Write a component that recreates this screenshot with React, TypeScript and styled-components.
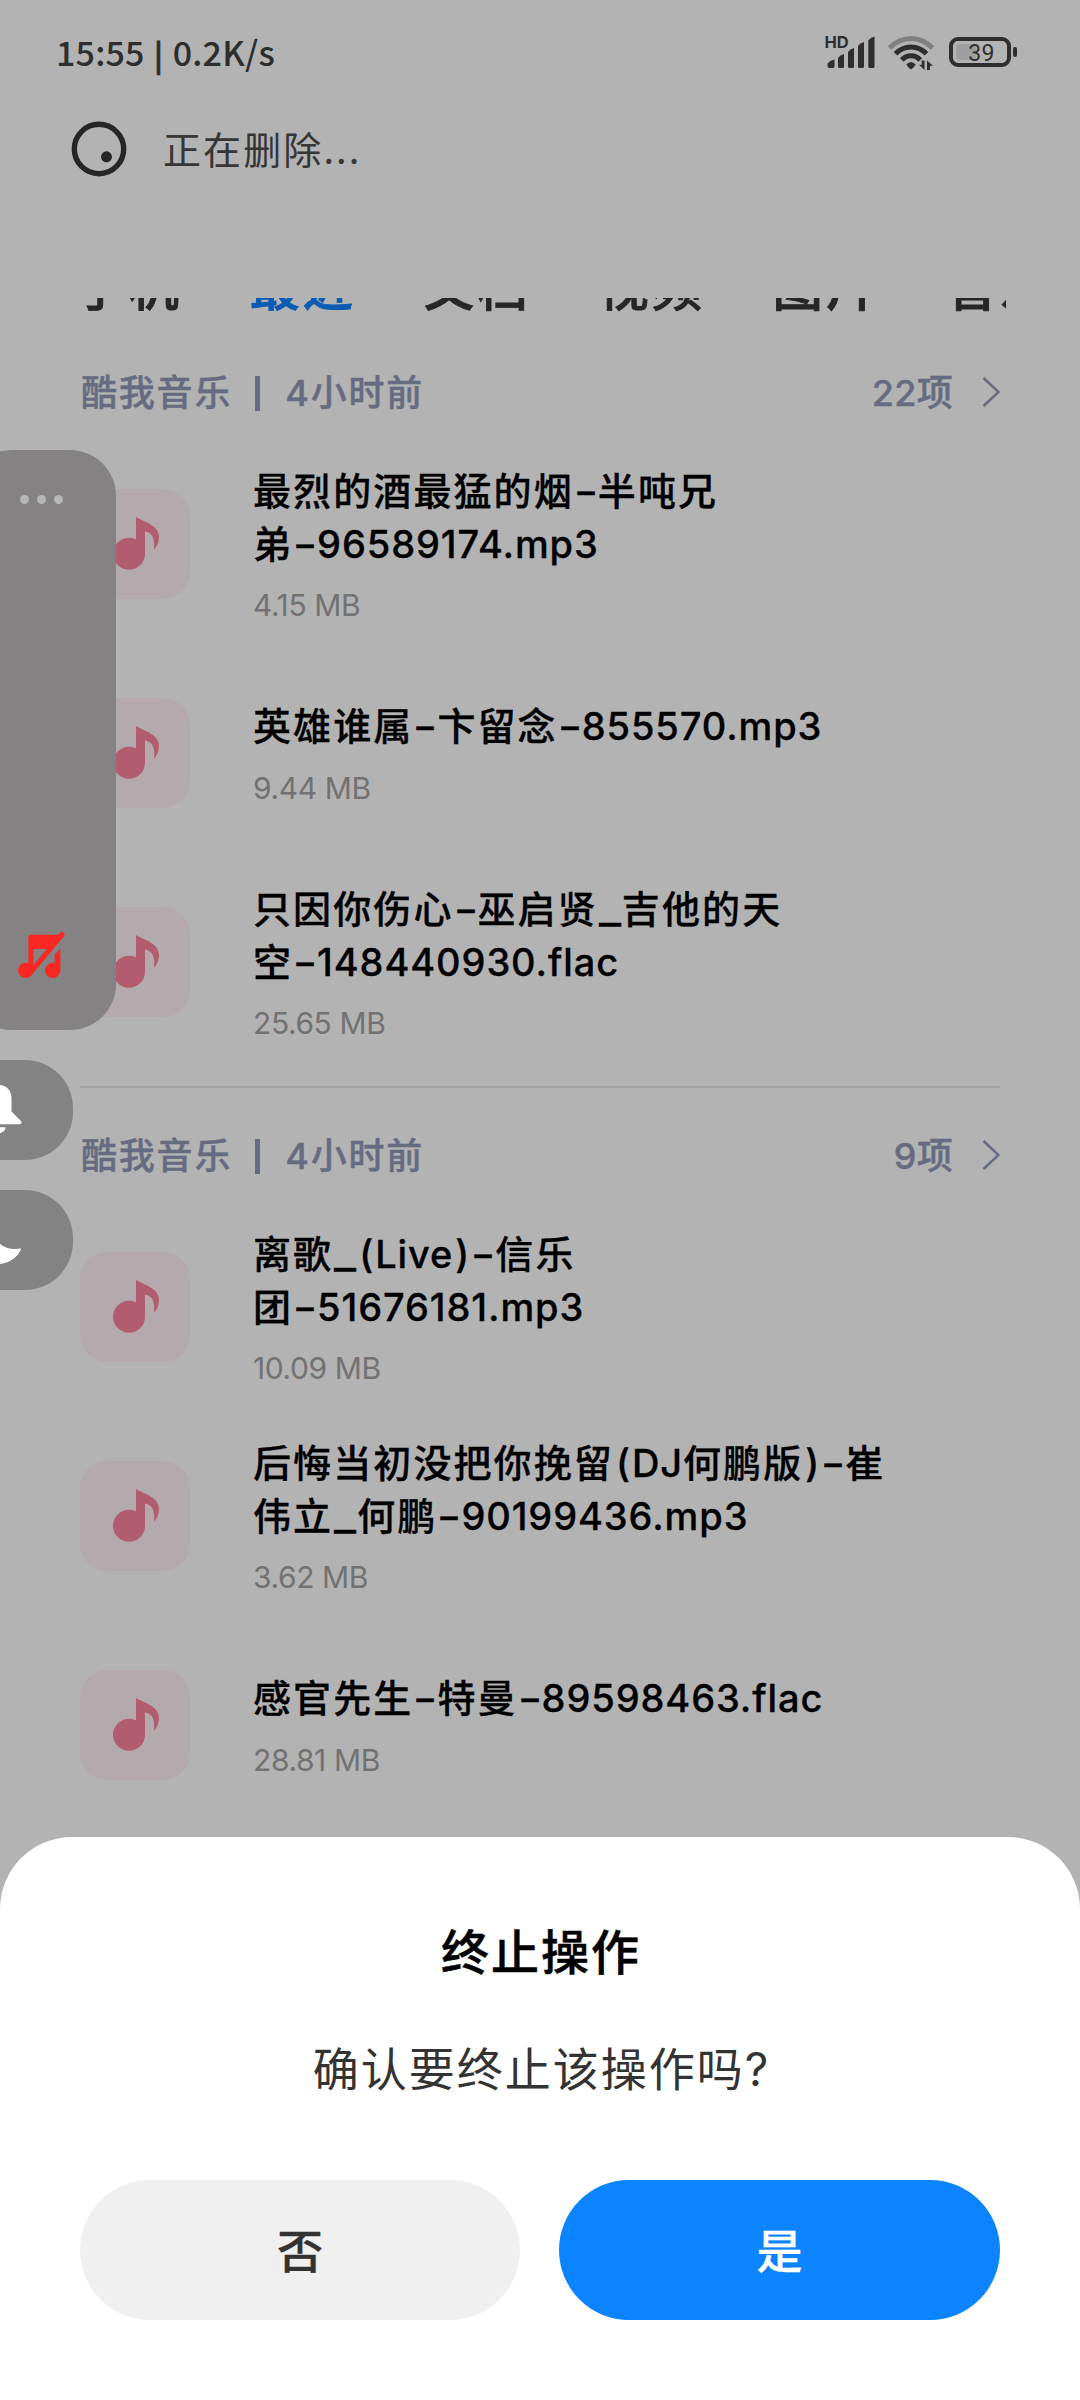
import React from 'react';
import styled, { createGlobalStyle } from 'styled-components';

const GlobalStyle = createGlobalStyle`
  * { box-sizing: border-box; }
  html, body { margin: 0; padding: 0; }
  body { background: #b3b3b3; font-family: Inter, 'Noto Sans CJK SC', sans-serif; }
  button { font: inherit; border: 0; padding: 0; }
`;

const Screen = styled.div`
  position: relative;
  width: 1080px;
  height: 2400px;
  overflow: hidden;
  background: #b3b3b3;
  display: flex;
  flex-direction: column;
`;

const StatusBar = styled.header`
  height: 104px;
  padding: 0 60px 0 56px;
  display: flex;
  align-items: center;
  justify-content: space-between;
`;

const Clock = styled.div`
  font-family: 'Noto Sans CJK SC', sans-serif;
  font-size: 34px;
  line-height: 40px;
  font-weight: 500;
  letter-spacing: 0.2px;
  color: #2e2e2e;
  white-space: pre;
`;

const Pipe = styled.span`
  display: inline-block;
  width: 28px;
  text-align: center;
  font-size: 30px;
  -webkit-text-stroke: 1.2px currentColor;
`;

const Toast = styled.div`
  height: 89px;
  padding-left: 71px;
  display: flex;
  align-items: center;
  gap: 36px;
`;

const ToastText = styled.span`
  margin-top: -1px;
  font-family: 'Noto Sans CJK SC', sans-serif;
  font-size: 38px;
  line-height: 50px;
  letter-spacing: 2.1px;
  color: #363636;
`;

const TabStrip = styled.nav`
  margin: 105px 0 12px 75px;
  width: 931px;
  height: 36px;
  overflow: hidden;
  display: flex;
  align-items: flex-end;
  gap: 67.6px;
`;

const Tab = styled.span<{ $active?: boolean }>`
  flex: none;
  font-size: 50.4px;
  line-height: 60px;
  letter-spacing: 3px;
  font-weight: 500;
  margin-bottom: 16px;
  color: ${(p) => (p.$active ? '#0a5cb4' : '#262626')};
  -webkit-text-stroke: 0.9px currentColor;
`;

const Group = styled.section<{ $divided?: boolean }>`
  margin: ${(p) => (p.$divided ? '19px' : '0')} 80px 0;
  border-top: ${(p) => (p.$divided ? '2px solid #a0a0a0' : '0')};
  padding-top: ${(p) => (p.$divided ? '21px' : '0')};
`;

const GroupHead = styled.div`
  height: 94px;
  display: flex;
  align-items: center;
  font-size: 36px;
  line-height: 50px;
  font-weight: 500;
  color: #676b81;
  -webkit-text-stroke: 0.4px currentColor;
`;

const GroupTitle = styled.span`
  padding-left: 1px;
  letter-spacing: 1.8px;
`;

const Bar = styled.i`
  width: 5px;
  height: 35px;
  margin: 0 24px 0 23px;
  background: #676b81;
`;

const Count = styled.span`
  margin-left: auto;
  margin-right: 29px;
  letter-spacing: 0.3px;
`;

const Row = styled.article`
  height: 209px;
  display: flex;
  align-items: center;
  gap: 63px;
`;

const Cover = styled.div`
  width: 110px;
  height: 110px;
  margin-bottom: 1px;
  border-radius: 27px;
  background: #b4a9ac;
`;

const Info = styled.div`
  padding-top: 1px;
  display: flex;
  flex-direction: column;
  gap: 15px;
`;

const Name = styled.div`
  font-size: 38px;
  line-height: 52.5px;
  font-weight: 500;
  color: #000;
  -webkit-text-stroke: 0.3px currentColor;
`;

const Line = styled.div`
  width: max-content;
  white-space: nowrap;
`;

const Han = styled.span`
  letter-spacing: 2.1px;
`;

const Latin = styled.span`
  letter-spacing: 0.9px;
`;

const Paren = styled.span`
  padding: 0 2px;
`;

const Under = styled.span`
  display: inline-block;
  width: 24px;
  text-align: center;
  transform: scaleX(1.25);
`;

const Dash = styled.span`
  display: inline-block;
  width: 24px;
  text-align: center;
  transform: scaleX(1.4);
`;

const Size = styled.span`
  font-size: 30px;
  line-height: 40px;
  letter-spacing: -0.4px;
  color: #727272;
`;

const Panel = styled.aside`
  position: absolute;
  left: -34px;
  top: 450px;
  width: 150px;
  height: 580px;
  border-radius: 46px;
  background: #848282;
  display: flex;
  flex-direction: column;
  align-items: center;
  justify-content: space-between;
  padding: 45px 0 52px;
`;

const Dots = styled.div`
  display: flex;
  gap: 8px;
  i {
    width: 9px;
    height: 9px;
    border-radius: 50%;
    background: #b6b6b6;
  }
`;

const SideButton = styled.button<{ $top: number }>`
  position: absolute;
  left: -77px;
  top: ${(p) => p.$top}px;
  width: 150px;
  height: 100px;
  border-radius: 48px;
  background: #838383;
`;

const Sheet = styled.div`
  position: absolute;
  left: 0;
  right: 0;
  bottom: 0;
  height: 563px;
  border-radius: 72px 72px 0 0;
  background: #fff;
  padding: 81px 80px 0;
  display: flex;
  flex-direction: column;
  align-items: center;
`;

const SheetTitle = styled.h1`
  margin: 0;
  padding-left: 2px;
  font-size: 48px;
  line-height: 70px;
  font-weight: 500;
  letter-spacing: 2px;
  color: #000;
  -webkit-text-stroke: 0.5px currentColor;
`;

const SheetText = styled.p`
  margin: 46px 0 0;
  padding-left: 3px;
  font-size: 46px;
  line-height: 70px;
  letter-spacing: 2px;
  color: #333;
`;

const Actions = styled.div`
  margin-top: 76px;
  width: 920px;
  display: grid;
  grid-template-columns: 440px 441px;
  gap: 39px;
`;

const Action = styled.button<{ $primary?: boolean }>`
  height: 140px;
  padding-bottom: 4px;
  border-radius: 70px;
  font-size: 46px;
  font-weight: 500;
  color: ${(p) => (p.$primary ? '#fff' : '#333')};
  background: ${(p) => (p.$primary ? '#0d84ff' : '#f0f0f0')};
  -webkit-text-stroke: 0.3px currentColor;
`;

function Mixed({ text }: { text: string }) {
  const runs = text.match(/[\u4e00-\u9fff]+|[-_()]|[^\u4e00-\u9fff\-_()]+/g) ?? [];
  return (
    <Line>
      {runs.map((r, i) => {
        if (r === '-') return <Dash key={i}>-</Dash>;
        if (r === '_') return <Under key={i}>_</Under>;
        if (r === '(' || r === ')') return <Paren key={i}>{r}</Paren>;
        return /[\u4e00-\u9fff]/.test(r) ? <Han key={i}>{r}</Han> : <Latin key={i}>{r}</Latin>;
      })}
    </Line>
  );
}

const StatusIcons = () => (
  <svg width="195" height="44" viewBox="825 30 195 44" fill="#2e2e2e">
    <text x="824.5" y="48" fontFamily="Inter, sans-serif" fontSize="16.5" fontWeight="700">HD</text>
    <path d="M827.5 66v-2.5q3-3.5 7-4V66.5q0 1.5-1.5 1.5h-4q-1.5 0-1.5-2Z" />
    <path d="M838 58q2-3 6-4V66.5q0 1.5-1.5 1.5h-3q-1.5 0-1.5-1.5Z" />
    <path d="M848 52q2-3 6-4V66.5q0 1.5-1.5 1.5h-3q-1.5 0-1.5-1.5Z" />
    <path d="M858 46q2-3 6-4V66.5q0 1.5-1.5 1.5h-3q-1.5 0-1.5-1.5Z" />
    <path d="M868.3 40.5q2-3 6.2-4V66.5q0 1.5-1.5 1.5h-3.2q-1.5 0-1.5-1.5Z" />
    <g fill="none" strokeWidth="5">
      <path d="M889.5 48Q899 38.4 911 38.4T932.5 48" stroke="#808080" />
      <path d="M895.5 53.8Q902 47 911 47T926.5 53.8" stroke="#2e2e2e" />
      <path d="M901.8 60Q905.5 55.8 911 55.8T920.2 60" stroke="#2e2e2e" />
    </g>
    <path d="M906.3 64.5Q911 59.5 915.7 64.5Q914.5 67 911 69.5Q907.5 67 906.3 64.5Z" />
    <path d="M924.5 60.5v9.500l-5.500-5.200h2.700v-4.300zM927 70v-9.500l6 5.200h-3.100V70z" />
    <rect x="951" y="39" width="58" height="26" rx="7" fill="none" stroke="#2e2e2e" strokeWidth="4" />
    <rect x="956" y="44" width="20" height="16" rx="3" fill="#9e9e9e" />
    <text x="981.5" y="60.5" textAnchor="middle" fontFamily="Roboto, sans-serif" fontSize="23" letterSpacing="0.3">39</text>
    <rect x="1013" y="47" width="4" height="10" rx="2" />
  </svg>
);

const NoteIcon = () => (
  <svg width="110" height="110" viewBox="0 0 110 110" fill="#b25c70">
    <circle cx="49" cy="64.7" r="16" />
    <path d="M56 28C64 33 79 36 79 48C79 53 77 57 74 61C75 50 73 44 65 42.5V65H56Z" />
  </svg>
);

const MusicOffIcon = () => (
  <svg width="48" height="46" viewBox="50 66 144 138" fill="#f82722">
    <circle cx="76" cy="181" r="23" />
    <circle cx="157" cy="181" r="23" />
    <path d="M84 181V82Q84 74 92 74H182L142 117H99V181Z" />
    <path d="M163 181V134L180 116V181Z" />
    <path d="M185 74L88 190" stroke="#f82722" strokeWidth="15" strokeLinecap="round" />
  </svg>
);

const BellIcon = () => (
  <svg width="150" height="100" viewBox="0 0 150 100" fill="#fff">
    <path d="M75 25C83 25 88.5 30 88.5 38V51.5L98 61Q99.5 64.3 96.5 64.3H53.5Q50.5 64.3 52 61L61.5 51.5V38C61.5 30 67 25 75 25Z" />
    <path d="M67.5 67.2H82.5A7.5 6.2 0 0 1 67.5 67.2Z" />
  </svg>
);

const MoonIcon = () => (
  <svg width="150" height="100" viewBox="0 0 150 100" fill="#fff">
    <path d="M97.8 60A24 24 0 1 1 66 28C64 40 70 51 77 54C83 58.8 90 60 96 58.5Q98.2 58.2 97.8 60Z" />
  </svg>
);

const groups = [
  {
    count: '22项',
    files: [
      { lines: ['最烈的酒最猛的烟-半吨兄', '弟-96589174.mp3'], size: '4.15 MB' },
      { lines: ['英雄谁属-卞留念-855570.mp3'], size: '9.44 MB' },
      { lines: ['只因你伤心-巫启贤_吉他的天', '空-148440930.flac'], size: '25.65 MB' },
    ],
  },
  {
    count: '9项',
    files: [
      { lines: ['离歌_(Live)-信乐', '团-51676181.mp3'], size: '10.09 MB' },
      { lines: ['后悔当初没把你挽留(DJ何鹏版)-崔', '伟立_何鹏-90199436.mp3'], size: '3.62 MB' },
      { lines: ['感官先生-特曼-89598463.flac'], size: '28.81 MB' },
    ],
  },
];

export default function App() {
  return (
    <Screen>
      <GlobalStyle />
      <StatusBar>
        <Clock>15:55<Pipe>|</Pipe>0.2K/s</Clock>
        <StatusIcons />
      </StatusBar>
      <Toast>
        <svg width="56" height="56" viewBox="0 0 56 56">
          <circle cx="28" cy="28" r="24.7" fill="none" stroke="#262626" strokeWidth="5.4" />
          <circle cx="35.5" cy="35.8" r="5.5" fill="#262626" />
        </svg>
        <ToastText>正在删除...</ToastText>
      </Toast>
      <TabStrip>
        {['手机', '最近', '文档', '视频', '图片', '音乐'].map((t) => (
          <Tab key={t} $active={t === '最近'}>{t}</Tab>
        ))}
      </TabStrip>
      {groups.map((g, i) => (
        <Group key={g.count} $divided={i > 0}>
          <GroupHead>
            <GroupTitle>酷我音乐</GroupTitle>
            <Bar />
            <GroupTitle>4小时前</GroupTitle>
            <Count>{g.count}</Count>
            <svg width="18" height="32" viewBox="0 0 18 32" fill="none" stroke="#676b81" strokeWidth="2.4">
              <path d="M1.5 1L16.5 15L1.5 29" />
            </svg>
          </GroupHead>
          {g.files.map((f) => (
            <Row key={f.size}>
              <Cover><NoteIcon /></Cover>
              <Info>
                <Name>{f.lines.map((l) => <Mixed key={l} text={l} />)}</Name>
                <Size>{f.size}</Size>
              </Info>
            </Row>
          ))}
        </Group>
      ))}
      <Panel>
        <Dots><i /><i /><i /></Dots>
        <MusicOffIcon />
      </Panel>
      <SideButton $top={1060}><BellIcon /></SideButton>
      <SideButton $top={1190}><MoonIcon /></SideButton>
      <Sheet>
        <SheetTitle>终止操作</SheetTitle>
        <SheetText>确认要终止该操作吗?</SheetText>
        <Actions>
          <Action>否</Action>
          <Action $primary>是</Action>
        </Actions>
      </Sheet>
    </Screen>
  );
}
